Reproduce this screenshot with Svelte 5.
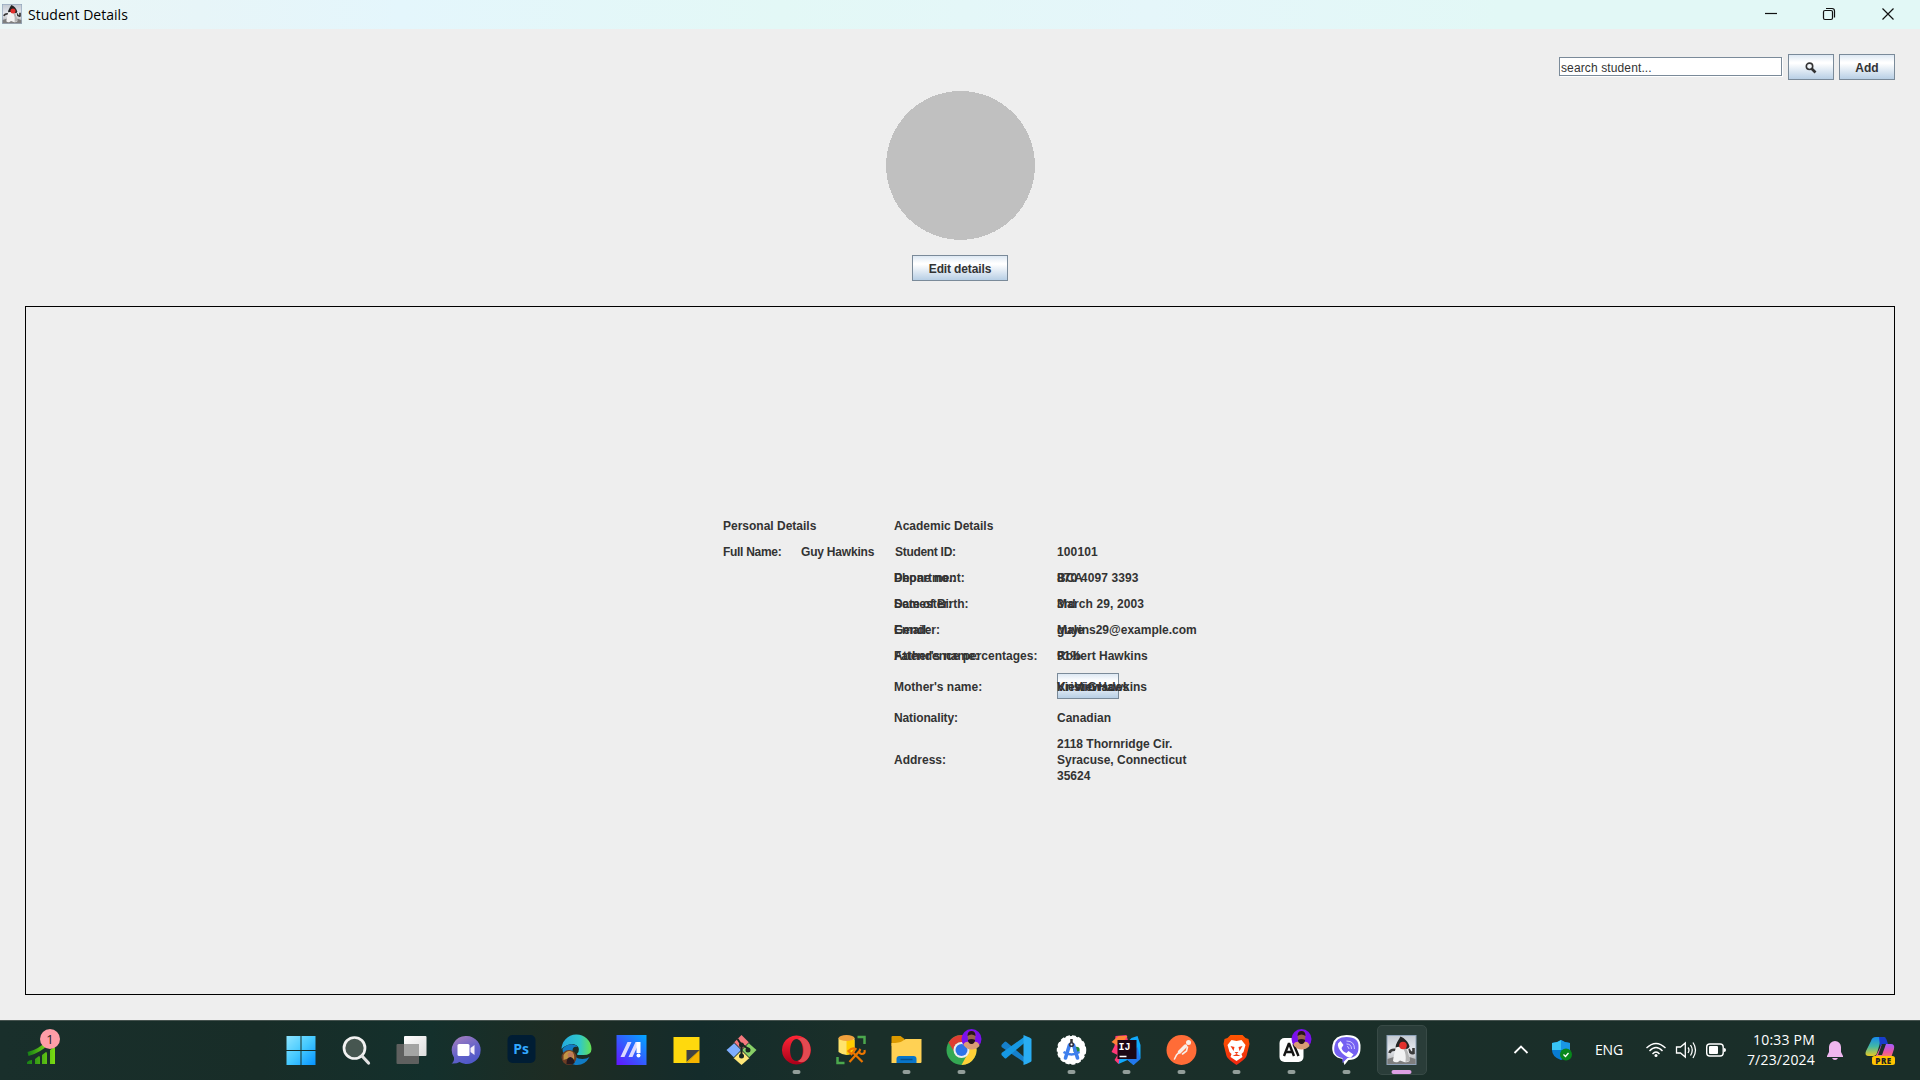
<script>
  const rows = [
    { labels: ['Phone no.:', 'Department:'], values: ['870 4097 3393', 'BCA'] },
    { labels: ['Date of Birth:', 'Semester:'], values: ['March 29, 2003', '3rd'] },
    { labels: ['Gender:', 'Email:'], values: ['Male', 'guyins29@example.com'] },
    { labels: ["Father's name:", 'Attendence percentages:'], values: ['Robert Hawkins', '91%'] },
    { labels: ["Mother's name:"], values: ['Kristin Hawkins', 'View Grades'], button: 'View' },
    { labels: ['Nationality:'], values: ['Canadian'] }
  ];
  const apps = [
    'start', 'search', 'tasks', 'chat', 'ps', 'edge', 'asus', 'notes', 'git', 'opera', 'db',
    'folder', 'chrome', 'code', 'studio', 'idea', 'postman', 'brave', 'anthropic', 'viber', 'java'
  ];
  const running = ['opera', 'folder', 'chrome', 'studio', 'idea', 'postman', 'brave', 'anthropic', 'viber'];
</script>

{#snippet duke()}
  <defs><linearGradient id="sky" x2="0" y2="1"><stop stop-color="#c3c9d2" /><stop offset=".5" stop-color="#e6e9ee" /><stop offset="1" stop-color="#a8a8a8" /></linearGradient></defs>
  <rect x="-14.500" y="-14.500" width="29" height="29" fill="url(#sky)" stroke="#8fa3ba" />
  <path d="M-14 9q7-3 14-3t14 3v5h-28z" fill="#7e7e7e" />
  <path d="M-5 0q-6-1-7 3M7-1q2 5 5 4v-5" fill="none" stroke="#3a3a3a" stroke-width="2.600" />
  <path d="M-4-6C-7 0-8 8-8.500 11q2 2 5 1l2-1.500 4 1.500q3 1 5.500-1C8 5 7-1 6-6z" fill="#f2f2f2" />
  <path d="M4-3q4 7 4 14l-4 1q1-8-2-13z" fill="#b5b5b5" />
  <path d="M-1-13.500C-3-10-6-6-6-2.500q3-1 5.500-.5l6 2q2-1 2.500-2.500C7-8 3-12-1-13.500z" fill="#242424" />
  <circle cx="1.500" cy="-4.500" r="3.800" fill="#e3302d" />
{/snippet}

{#snippet avatar()}
  <circle cx="10" cy="-11" r="10" fill="#7b10ee" />
  <path d="M2-5Q3-9 8-8h4q5-1 6 4A10 10 0 0 1 2-5z" fill="#d99c76" />
  <path d="M6-15q0-4 4-4t4 4l-.5 5q-1.500 4-3.500 4t-3.500-4z" fill="#9a654c" />
  <path d="M6-14q0-5 4-5t4 5q-4-3-8 0zM6.300-10q3.700-2 7.400 0-.7 4-3.700 4t-3.700-4z" fill="#26151c" />
{/snippet}

<div class="screen">
  <header class="titlebar">
    <svg class="app-icon" viewBox="-15 -15 30 30">{@render duke()}</svg>
    <span class="title">Student Details</span>
    <svg class="window-controls" viewBox="0 0 174 29" fill="none" stroke="#111" stroke-width="1.200">
      <path d="M19 13.500h12" />
      <rect x="77.500" y="10.500" width="9" height="9" rx="1.500" />
      <path d="M80 8.500h6q2.500 0 2.500 2.500v6.500" />
      <path d="m136.500 8.500 11 11m0-11-11 11" />
    </svg>
  </header>

  <main>
    <div class="toolbar">
      <input class="search" value="search student..." aria-label="search student" />
      <button class="metal lookup" aria-label="Search">
        <svg width="12" height="12" viewBox="0 0 12 12" fill="none" stroke="#333">
          <circle cx="4.500" cy="4.300" r="3.200" stroke-width="1.600" /><path d="m6.500 6.500 4 4" stroke-width="2.600" />
        </svg>
      </button>
      <button class="metal add">Add</button>
    </div>
    <svg class="photo" viewBox="0 0 149 149" shape-rendering="crispEdges"><circle cx="74.500" cy="74.500" r="74.500" fill="silver" /></svg>
    <button class="metal edit">Edit details</button>

    <section class="panel">
      <div class="details">
        <span>Personal Details</span><span></span><span>Academic Details</span><span></span>
        <span class="tight">Full Name:</span><span class="snug">Guy Hawkins</span><span class="nudge tight">Student ID:</span><span class="digits">100101</span>
        {#each rows as row}
          <div class="stack label">{#each row.labels as text}<span class:close={text === 'Date of Birth:' || text === 'Nationality:'}>{text}</span>{/each}</div>
          <div class="stack">
            {#if row.button}<button class="metal view">{row.button}</button>{/if}
            {#each row.values as text}<span class:digits={/^\d+ \d|2003/.test(text)}>{text}</span>{/each}
          </div>
        {/each}
        <span class="label">Address:</span>
        <span class="address">2118 Thornridge Cir.<br />Syracuse, Connecticut<br />35624</span>
      </div>
    </section>
  </main>

  <footer class="taskbar">
    <div class="widgets">
      <svg width="32" height="40" viewBox="0 0 32 40">
        <defs><linearGradient id="stock"><stop stop-color="#178016" /><stop offset="1" stop-color="#7bdc12" /></linearGradient></defs>
        <path d="M2 26q12-3 20-12" fill="none" stroke="url(#stock)" stroke-width="4" />
        <path d="M1 34q2-2 5-2v4H1zM9 31l4-3q1 0 1 2v6H9zM16 27l4-3q1 0 1 2v10h-5zM24 22l4-3q1 0 1 2v15h-5z" fill="url(#stock)" />
      </svg>
      <span class="count">1</span>
    </div>

    <nav class="apps">
      {#each apps as app}
        <div class="app" class:active={app === 'java'}>
          <svg viewBox="-27.500 -30 55 60">
            {#if app === 'start'}
              <defs><linearGradient id="win" x1="-14" y1="-14" x2="14" y2="14" gradientUnits="userSpaceOnUse"><stop stop-color="#8be4ff" /><stop offset=".5" stop-color="#45c9ff" /><stop offset="1" stop-color="#0795ff" /></linearGradient></defs>
              <path d="M-15-14h14V0h-14zM0-14h14V0H0zM-15 1h14v14h-14zM0 1h14v14H0z" fill="url(#win)" />
            {:else if app === 'search'}
              <circle cx="-2" cy="-2" r="10.500" fill="#465650" stroke="#f2f2f2" stroke-width="2.700" />
              <path d="m5.500 6 6.500 7" stroke="#e2e2e2" stroke-width="3.200" stroke-linecap="round" />
            {:else if app === 'tasks'}
              <defs><linearGradient id="paper" x1="0" y1="0" x2="1" y2="1"><stop stop-color="#fff" /><stop offset="1" stop-color="#ddd" /></linearGradient></defs>
              <rect x="-7.500" y="-14" width="22.500" height="20" rx="1" fill="url(#paper)" />
              <rect x="-15" y="-6" width="22.500" height="20" rx="1" fill="#5f605f" />
              <rect x="-7.500" y="-6" width="15" height="12" fill="#a4a5a4" />
            {:else if app === 'chat'}
              <defs><linearGradient id="violet" x1="0" y1="0" x2=".5" y2="1"><stop stop-color="#ad82bd" /><stop offset=".6" stop-color="#6864c8" /><stop offset="1" stop-color="#5059c9" /></linearGradient></defs>
              <path d="M0-14A14 14 0 1 1-7 12q-3 2-8 1.500 3-2 2.500-6A14 14 0 0 1 0-14z" fill="url(#violet)" />
              <rect x="-9" y="-6" width="12" height="12" rx="1.500" fill="#fff" /><path d="m4-2 4-3v10L4 2z" fill="#f3eef9" />
            {:else if app === 'ps'}
              <rect x="-14" y="-15" width="28" height="28" rx="5" fill="#001d34" />
              <text x="-.5" y="4" text-anchor="middle" class="ps">Ps</text>
            {:else if app === 'edge'}
              <defs><linearGradient id="edge"><stop stop-color="#24a9df" /><stop offset=".6" stop-color="#2fc7cc" /><stop offset="1" stop-color="#65e251" /></linearGradient></defs>
              <path d="M-15 0A15 15 0 0 1 15-1q0 6-8 6H2q-3 0 0-3 2-6-5-8-7 0-12 5z" fill="url(#edge)" />
              <path d="M-14-1C-10-7-1-7 1-3Q-4-4-4 1q1 8 10 8 4 0 7-2-5 9-14 8-12-2-13-16z" fill="#117cc5" />
              <circle cx="-7.500" cy="7.500" r="7.500" fill="#6d3d24" />
              <path d="M-13 5q4-6 9-3 3 4 1 9l-4-3-6 2z" fill="#c49545" /><circle cx="-6" cy="5" r="2.800" fill="#bd795c" />
              <path d="M-10 14q0-7 4-7 4 1 4 6-2 2-8 1z" fill="#26191e" />
            {:else if app === 'asus'}
              <defs><linearGradient id="asus" x1="0" y1="1" x2="1" y2="0"><stop stop-color="#6413ff" /><stop offset="1" stop-color="#00a9ff" /></linearGradient></defs>
              <path d="M-15-15h30v30h-30z" fill="url(#asus)" />
              <path d="M-11 7-4-8H0L-7 7zM-3 7 4-8h4L1 7z" fill="#dcd9ff" /><path d="M5-8h4V3H5z" fill="#fff" /><circle cx="7" cy="5.500" r="2" fill="#fff" />
            {:else if app === 'notes'}
              <path d="M-13-13h26V0L0 13h-13z" fill="#ffd90d" /><path d="M13 0v13H0z" fill="#f6b500" /><path d="M0 0h13L0 12z" fill="#424242" />
            {:else if app === 'git'}
              <path d="m0-15 8 8-8 8-8-8z" fill="#f4787d" /><path d="m7-7 8 7-8 8-7-8z" fill="#88cf67" /><path d="m-7-7 7 7-7 8-8-8z" fill="#7eaeff" /><path d="m0 0 8 8-8 7-8-7z" fill="#ffe779" />
              <path d="M-8-8 8 8M8-8-8 8" stroke="#1a302b" stroke-width="1" />
              <path d="m-4-11 4 6V6M0-6l7 5" stroke="#172522" stroke-width="2" fill="none" />
              <circle cx="0" cy="-5" r="2.500" fill="#172522" /><circle cx="0" cy="6" r="2.500" fill="#172522" /><circle cx="6.500" r="2.500" fill="#172522" />
            {:else if app === 'opera'}
              <defs><linearGradient id="opera" x2="0" y2="1"><stop stop-color="#ff2636" /><stop offset="1" stop-color="#a90019" /></linearGradient></defs>
              <path fill-rule="evenodd" d="M0-14.500a14.500 14.500 0 1 1-.1 0zM0-11c-8 0-9 22 0 22s8-22 0-22z" fill="url(#opera)" />
              <path d="M1-11C8-15 14-8 14 0c0 8-6 15-13 11 8-2 8-20 0-22z" fill="#e34a51" />
            {:else if app === 'db'}
              <path d="M-13-12H3V2q-4 3-8 3t-8-3z" fill="#ffe36c" /><path d="M-5-10H3V2q-4 3-8 3z" fill="#ffcd00" /><ellipse cx="-5" cy="-12" rx="8" ry="3" fill="#f0a13d" />
              <path d="M6-13h7v7M-14 7v6h7" stroke="#4ba84d" stroke-width="2.500" fill="none" />
              <path d="m-2 12 10-11M11 12 1 2M-3 1q4-4 7-2l-4 5zM9-1q-3 4 1 5 4 0 3-4" stroke="#ec7600" stroke-width="2.200" fill="none" />
            {:else if app === 'folder'}
              <path d="M-15-13q0-1 1-1h8l4 3v7h-13z" fill="#dc9a00" /><path d="M-15-7q8 0 11-2l3-2h16v23q0 1-1 1h-29z" fill="#ffd154" />
              <path d="M-10 13V9q0-3 3-3H7q3 0 3 3v4z" fill="#0875ca" /><path d="M-6 9.500H6" stroke="#07508d" stroke-width="1.500" />
            {:else if app === 'chrome'}
              <circle r="15" fill="#34a853" /><path d="M-13-7.500A15 15 0 0 1 13-7.500H0A7 7 0 0 0-6 4z" fill="#df3d32" /><path d="M13-7.500A15 15 0 0 1 0 15L6 4A7 7 0 0 0 0-7.500z" fill="#ffd137" />
              <circle r="8" fill="#eee" /><circle r="6" fill="#2d73e8" />{@render avatar()}
            {:else if app === 'code'}
              <path d="m-15-5 3-3q1-1 2 0l20 17v5L-15-3z" fill="#1680cb" /><path d="m-15 5 3 3q1 1 2 0L9-8v-6L-15 3z" fill="#1698e3" /><path d="M7-15q8 3 8 4v22q0 1-8 4z" fill="#29adf3" />
            {:else if app === 'studio'}
              <circle r="14" fill="#fff" stroke="#fff" stroke-width="1.500" stroke-dasharray="4 2" />
              <circle cx="5" cy="0" r="3.200" fill="#23883b" />
              <path d="M-2-5-6 8M2-5 6 8" stroke="#3e7fed" stroke-width="3.600" stroke-linecap="round" /><path d="M-8 2Q0 7 8 2" stroke="#3e7fed" stroke-width="2.400" fill="none" /><path d="M0-11v4" stroke="#333" stroke-width="2.500" /><circle cy="-5.500" r="1.800" fill="#fff" stroke="#334" stroke-width="1.600" />
            {:else if app === 'idea'}
              <path d="m-11-14 11-1 4 15-12 14-4-4 3-5-6-3 3-6z" fill="#ff3977" /><path d="M-8-14 1-14-7-3-15-8z" fill="#ff8238" /><path d="m5-12 6-2 3 9v13l-7 7-6-5-9 4 3-16z" fill="#11a9fb" /><path d="m0 9 11-12 3 12-7 6z" fill="#2378ed" />
              <rect x="-9" y="-10" width="19" height="19" fill="#1b0714" /><text x="-8" y="0" class="ij">IJ</text><path d="M-7 6.500h7" stroke="#fff" stroke-width="1.500" />
            {:else if app === 'postman'}
              <circle r="15" fill="#ff6c37" /><circle cx="7" cy="-7.500" r="2.500" fill="#f8eee8" /><path d="M4-4-2 2" stroke="#f8eee8" stroke-width="3.500" stroke-linecap="round" /><path d="m-2 2-3 3-2 4M6-3 5 1l-4 3" stroke="#f8eee8" stroke-width="1.600" stroke-linecap="round" fill="none" />
            {:else if app === 'brave'}
              <defs><linearGradient id="brave" x2="0" y2="1"><stop stop-color="#ff5600" /><stop offset="1" stop-color="#f02712" /></linearGradient></defs>
              <path d="M-6-15H6l3 3 3 1 1 5-3 12q-1 3-10 9-9-6-10-9l-3-12 1-5 3-1z" fill="url(#brave)" />
              <path d="M-5-10 0-9 5-10 9-5 7 2 5 4l1 3-6 4-6-4 1-3-2-2-2-7z" fill="#fff" /><path d="M-6-4-2-3l-1 4zM6-4 2-3l1 4zM-2 2h4L0 4zM-4 6l4-2 4 2" fill="#f33b12" />
            {:else if app === 'anthropic'}
              <rect x="-12" y="-12" width="24" height="24" rx="5" fill="#fff" /><path d="m-7.500 6 4.700-12h.6L2.500 6M-5.500 2h6M2-6 7 6" stroke="#151515" stroke-width="2.400" fill="none" />{@render avatar()}
            {:else if app === 'viber'}
              <path d="M0-15q15 0 14 13 0 12-12 12l-4 5-2-6Q-16 7-14-5-12-15 0-15z" fill="#fff" /><path d="M0-13q13 0 12 11 0 10-11 10l-5 5V8Q-14 6-12-4-11-13 0-13z" fill="#7560f2" />
              <path d="m-6-9 3 4-2 3q1 4 5 5L2 1l5 3.500L4.500 7.500q-3 1-9-4.500-5-6-4-9.500z" fill="#fff" /><path d="M0-9q8 0 8 8M0-6q5 0 5 5M.5-3.500Q2.500-3.500 2.500-1" stroke="#cfc8ff" stroke-width="1" fill="none" />
            {:else}
              {@render duke()}
            {/if}
            {#if running.includes(app)}<rect x="-4" y="20" width="8" height="4" rx="2" fill="#929e9a" />{/if}
            {#if app === 'java'}<rect x="-10" y="20" width="20" height="4" rx="2" fill="#dda0e4" />{/if}
          </svg>
        </div>
      {/each}
    </nav>

    <div class="tray">
      <svg width="20" height="20" viewBox="-10 -10 20 20" fill="none" stroke="#fff" stroke-width="1.800"><path d="m-6.500 3 6.500-6.500L6.500 3" /></svg>
      <svg width="22" height="22" viewBox="-10 -11 22 22">
        <path d="M-9-7q5 0 9-3 4 3 9 3v7q0 7-9 10-9-3-9-10z" fill="#087bd1" /><path d="M-9-7q5 0 9-3V0h-9z" fill="#38c4f4" /><path d="M0-10q4 3 9 3v7H0z" fill="#1997e4" />
        <circle cx="5" cy="4.500" r="6" fill="#07881b" /><path d="m2.500 4.500 2 2 3-3.500" fill="none" stroke="#fff" stroke-width="1.300" />
      </svg>
      <span class="lang">ENG</span>
      <svg width="22" height="20" viewBox="-11 -10 22 20" fill="none" stroke="#fff" stroke-width="1.400"><path d="M-9.500-2Q0-11 9.500-2M-6.500 1Q0-6 6.500 1M-3.500 4Q0 0 3.500 4" /><circle cy="5.500" r="1.500" fill="#fff" stroke="none" /></svg>
      <svg width="22" height="20" viewBox="-11 -10 22 20" fill="none" stroke="#fff" stroke-width="1.300"><path d="M-9.500-3h4L-.7-7V7l-4.800-4h-4zM2-2.500Q4 0 2 3M4.500-5Q8 0 4.500 5.500M7-7.500q5 7.500 0 15.500" /></svg>
      <svg width="22" height="20" viewBox="-11 -10 22 20"><rect x="-9.300" y="-6" width="16.500" height="12" rx="3" fill="none" stroke="#fff" stroke-width="1.400" /><rect x="-7" y="-4" width="9" height="8" rx="1" fill="#fff" /><path d="M8-2q2 0 2 2t-2 2z" fill="#fff" /></svg>
      <div class="clock"><span>10:33 PM</span><span>7/23/2024</span></div>
      <svg width="20" height="22" viewBox="-10 -11 20 22" fill="#efb7ef"><path d="M-6-3a6 6 0 0 1 12 0v5l2 4v1H-8V6l2-4zM-3 8h6q-1 2-3 2t-3-2z" /></svg>
      <svg width="32" height="32" viewBox="-16 -17 32 32">
        <defs>
          <linearGradient id="copA" x2="0" y2="1"><stop stop-color="#168bee" /><stop offset=".5" stop-color="#43b8a4" /><stop offset="1" stop-color="#e8ca23" /></linearGradient>
          <linearGradient id="copB" x2="0" y2="1"><stop stop-color="#a45cff" /><stop offset=".6" stop-color="#ee559c" /><stop offset="1" stop-color="#fb8c55" /></linearGradient>
        </defs>
        <path d="M-9-10q1-4 5-4H6Q2-14 0-8L-3 2q-1 3-4 3h-4q-5 0-3-5z" fill="url(#copA)" /><path d="M-1-14h4q3 0 4 4l1 3H4q-3 0-4 3z" fill="#183ccc" />
        <path d="M4-7h7q4 0 3 5l-3 9H-9q4 0 6-4L0-3q1-4 4-4z" fill="url(#copB)" /><path d="M2-7h4L2 4h-4z" fill="#1b2e2a" />
        <rect x="-8" y="5" width="23" height="9" rx="2.500" fill="#ffc400" /><text x="3.500" y="12.500" text-anchor="middle" class="pre">PRE</text>
      </svg>
    </div>
  </footer>
</div>

<style>
  :global(body) { margin: 0; overflow: hidden; }
  .screen { width: 1920px; height: 1080px; display: flex; flex-direction: column; background: #eee; color: #333; font: bold 12px/16px "Liberation Sans", Arial, sans-serif; }
  .titlebar { height: 29px; display: flex; align-items: center; background: linear-gradient(90deg, #eaf6f6 0, #e7f5f8 200px, #e4f6fc 400px, #e3f8f6 780px, #e5f6fa 1150px, #e2f8f6 1500px); }
  .app-icon { width: 20px; height: 20px; margin: -1px 0 0 2px; }
  .title { margin-left: 6px; color: #000; font: 14px/20px "Open Sans", sans-serif; letter-spacing: .03px; }
  .window-controls { width: 174px; height: 29px; margin-left: auto; }
  main { height: 991px; box-sizing: border-box; padding: 25px; display: flex; flex-direction: column; align-items: center; }
  .toolbar { align-self: flex-end; display: flex; align-items: flex-start; height: 26px; }
  .search { box-sizing: border-box; width: 223px; height: 19px; margin: 3px 6px 0 0; padding: 2px 1px 0; border: 1px solid #7a8a99; border-radius: 0; outline: 0; box-shadow: 1px 1px #fff; background: #fff; color: #333; font: 12px/15px "Liberation Sans", Arial, sans-serif; letter-spacing: .12px; }
  .metal { box-sizing: border-box; height: 26px; padding: 2px 0 0; border: 1px solid #7a8a99; border-radius: 0; background: linear-gradient(#dde8f3 0, #fff 30%, #fff 35%, #b8cfe5 100%); color: #333; font: bold 12px/16px "Liberation Sans", Arial, sans-serif; }
  .lookup { width: 46px; margin-right: 5px; display: grid; place-items: center; }
  .add { width: 56px; }
  .photo { width: 149px; height: 149px; margin: 11px 0 15px 1px; }
  .edit { width: 96px; letter-spacing: -.13px; }
  .panel { box-sizing: border-box; width: 1870px; height: 690px; margin-top: 25px; border: 1px solid #000; display: grid; place-items: center; }
  .details { display: grid; grid-template-columns: 78px 93px 163px 140px; row-gap: 10px; white-space: nowrap; margin-top: 2px; }
  .nudge { padding-left: 1px; }
  .tight { letter-spacing: -.3px; }
  .snug { letter-spacing: -.2px; }
  .close { letter-spacing: -.12px; }
  .digits { letter-spacing: .12px; }
  .label { grid-column: 3; align-self: center; }
  .stack { display: grid; align-items: center; }
  .stack > * { grid-area: 1 / 1; }
  .view { width: 62px; padding-top: 1px; margin: -1px 0 1px; }
  .taskbar { position: relative; height: 60px; box-sizing: border-box; display: flex; color: #fff; background: linear-gradient(90deg, #192f2b 0, #182d28 260px, #14302c 430px, #1e2c23 560px, #142c2b 700px, #1a2f29 850px, #1a2e29 100%); box-shadow: inset 0 1px #46534f; font: 14px/20px "Open Sans", sans-serif; }
  .widgets { position: relative; width: 273px; box-sizing: border-box; padding: 8px 0 0 26px; }
  .count { position: absolute; left: 40px; top: 9px; width: 20px; height: 20px; border-radius: 50%; background: #ff9da7; color: #222; text-align: center; font-size: 13px; }
  .apps { display: flex; width: 1227.500px; padding-left: .5px; }
  .app { width: 55px; height: 60px; flex: none; }
  .app svg { display: block; width: 55px; height: 60px; overflow: visible; }
  .active { margin: 5px 0 0 3px; width: 50px; height: 50px; box-sizing: border-box; border: 1px solid #384a46; border-radius: 5px; background: #2a3d39; }
  .active svg { margin: -6px 0 0 -3.500px; }
  .ps { font: bold 14px "Open Sans", sans-serif; fill: #32a8ff; }
  .ij { font: bold 10px "Liberation Mono", monospace; fill: #fff; }
  .pre { font: 800 8px "Open Sans", sans-serif; fill: #222; letter-spacing: .5px; }
  .tray { display: grid; grid-template-columns: 40px 41px 54px 40px 20px 40px 79px 40px 50px; align-items: center; justify-items: center; }
  .lang { letter-spacing: -.1px; }
  .clock { justify-self: end; display: flex; flex-direction: column; text-align: right; letter-spacing: .2px; white-space: nowrap; }
</style>
